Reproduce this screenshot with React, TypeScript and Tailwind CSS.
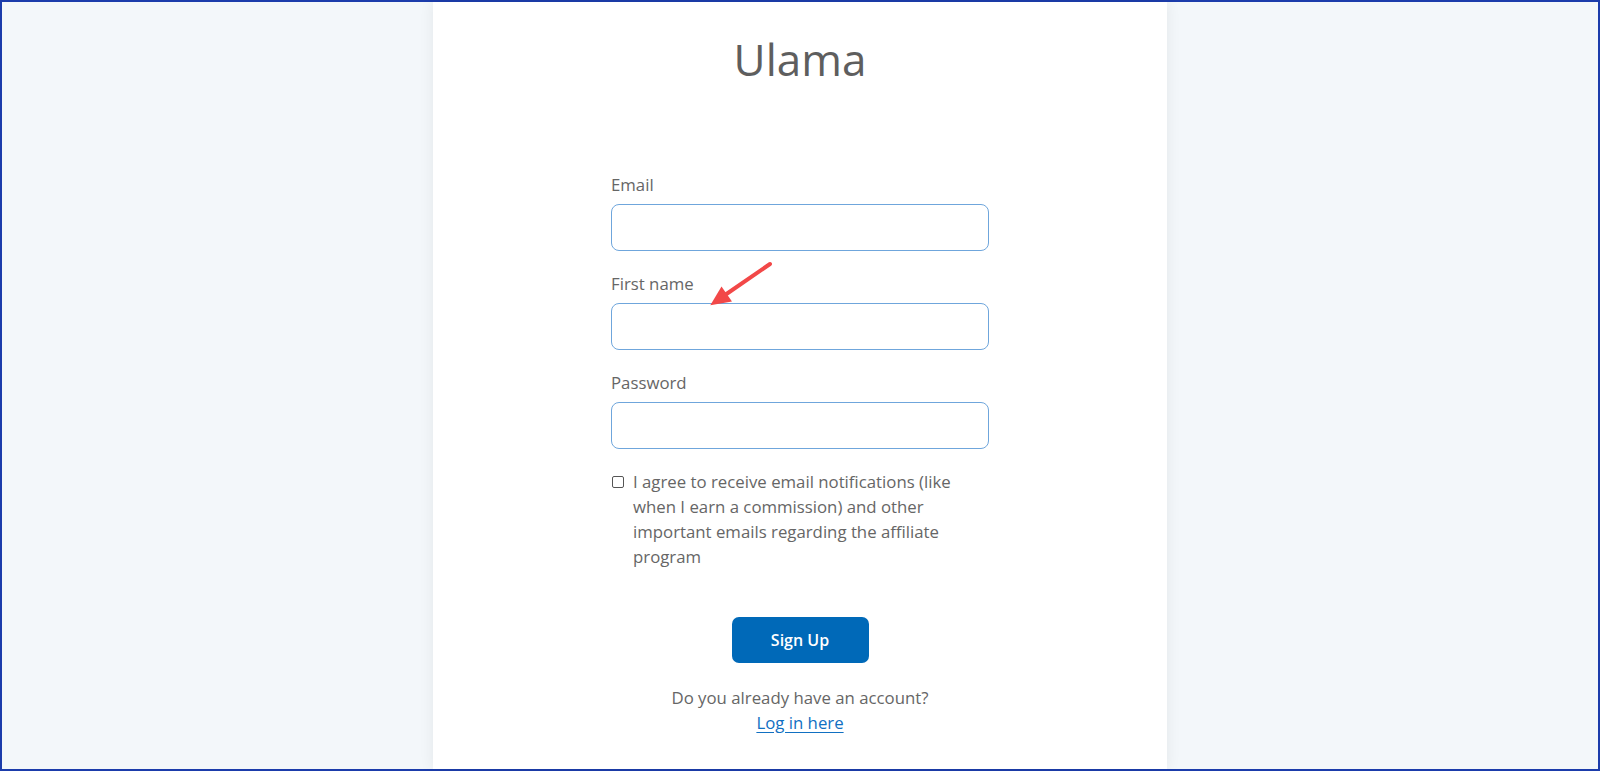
import React from 'react';

function Field({ label, type = 'text' }: { label: string; type?: string }) {
  return (
    <div className="mb-[21px] flex flex-col">
      <label className="text-[16.8px] leading-[24px] text-[#666]">{label}</label>
      <input
        type={type}
        className="mt-[7px] h-[47px] w-full rounded-[8px] border border-[#6fa6dc] bg-white px-3 text-[16px] outline-none"
      />
    </div>
  );
}

function Arrow() {
  return (
    <svg
      className="pointer-events-none absolute left-[700px] top-[250px]"
      width="80"
      height="60"
      viewBox="0 0 80 60"
    >
      <line x1="68" y1="12" x2="23" y2="43" stroke="#f24848" strokeWidth="4" strokeLinecap="round" />
      <polygon points="8.3,53.3 30,49.5 19.5,34.5" fill="#f24848" />
    </svg>
  );
}

export default function App() {
  return (
    <div
      className="relative flex h-[771px] w-full justify-center border-2 border-[#1b3cab] bg-[#f3f7fa]"
      style={{ fontFamily: '"Open Sans", "Noto Sans", sans-serif' }}
    >
      <div className="flex w-[734px] flex-col items-center bg-white shadow-[0_0_14px_rgba(0,0,0,0.07)]">
        <h1 className="pt-[30px] text-[44px] leading-[55px] font-normal text-[#5e5e5e]">Ulama</h1>

        <form className="mt-[86px] flex w-[378px] flex-col" onSubmit={(e) => e.preventDefault()}>
          <Field label="Email" type="email" />
          <Field label="First name" />
          <Field label="Password" type="password" />

          <div className="-mt-[1px] flex items-start">
            <span className="ml-[1px] mr-[9px] mt-[7px] block h-[12px] w-[12px] shrink-0 rounded-[2px] border border-[#555] bg-white" />
            <p className="text-[16.8px] leading-[25px] text-[#666]">
              I agree to receive email notifications (like when I earn a commission) and other important
              emails regarding the affiliate program
            </p>
          </div>

          <button
            type="submit"
            className="mx-auto mt-[48px] h-[46px] w-[137px] rounded-[7px] bg-[#0069b8] text-[16px] font-semibold text-white"
          >
            Sign Up
          </button>

          <div className="mt-[23px] text-center text-[16.8px] leading-[24.5px] text-[#666]">
            <p>Do you already have an account?</p>
            <a href="#" className="text-[#1170c2] underline underline-offset-[3px]">
              Log in here
            </a>
          </div>
        </form>
      </div>
      <Arrow />
    </div>
  );
}
